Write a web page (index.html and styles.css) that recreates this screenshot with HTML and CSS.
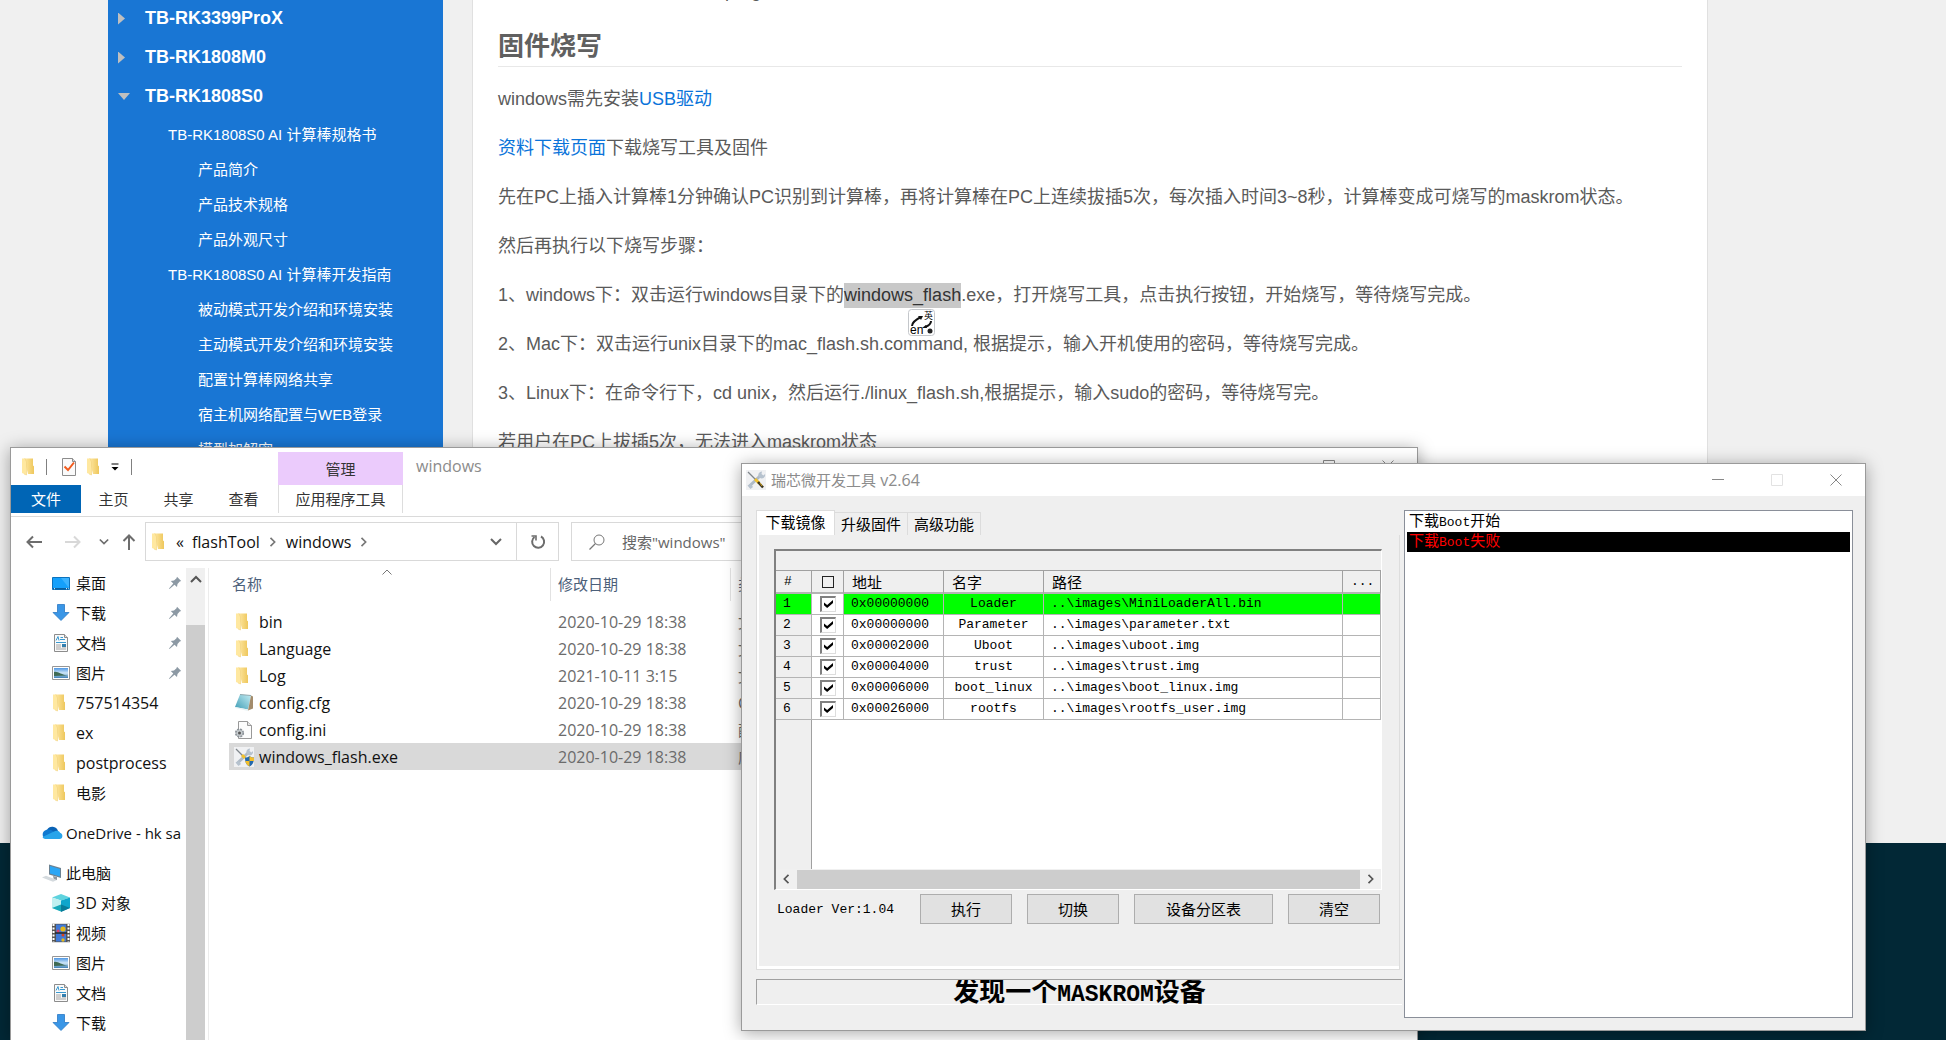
FILE: index.html
```html
<!DOCTYPE html>
<html lang="zh-CN">
<head>
<meta charset="utf-8">
<title>固件烧写</title>
<link rel="stylesheet" href="styles.css">
</head>
<body>
<svg class="sprite" aria-hidden="true">
  <defs>
    <linearGradient id="g-fold" x1="0" x2="1"><stop offset="0" stop-color="#ffe9a6"/><stop offset="1" stop-color="#eec75c"/></linearGradient>
    <linearGradient id="g-sky" x1="0" y1="0" x2="0" y2="1"><stop offset="0" stop-color="#4e97e4"/><stop offset=".5" stop-color="#cfe6f7"/><stop offset="1" stop-color="#3d7fb5"/></linearGradient>
    <linearGradient id="g-note" x1="0" y1="1" x2="1" y2="0"><stop offset="0" stop-color="#3f9db5"/><stop offset="1" stop-color="#c4edf4"/></linearGradient>
  </defs>
  <symbol id="i-folder" viewBox="0 0 20 20">
    <path d="M4 1.500h9v7l1 .8v7.700H8z" fill="url(#g-fold)"/>
    <path d="M2 1.500h3L6.500 5v13L2 16z" fill="#ffe8a0"/><path d="M5 1.500 6.500 5v13L4 17" fill="none" stroke="#f1d27c" stroke-width=".6"/>
  </symbol>
  <symbol id="i-check" viewBox="0 0 20 20">
    <path d="M3.500 1.500h10l3 3v14h-13z" fill="#fafafa" stroke="#8c8c8c"/><path d="M13.500 1.500v3h3" fill="#ddd" stroke="#8c8c8c"/>
    <path d="M5.500 9.500 9 13l6-7.500" fill="none" stroke="#f15a1d" stroke-width="2"/>
  </symbol>
  <symbol id="i-desktop" viewBox="0 0 20 20">
    <path d="M1.500 4.500h17v12h-17z" fill="#14a0fb" stroke="#0b72bd"/><path d="M10 5h8v10z" fill="#3bb3ff"/><path d="M2 15h16v1.500H2z" fill="#0a5f9e"/><path d="M3 15.700h1m11 0h1m1 0h.7" stroke="#fff"/>
  </symbol>
  <symbol id="i-down" viewBox="0 0 20 20"><path d="M6.500 1.500h7v8h4.500L10 17.500 2 9.500h4.500z" fill="#3a96e6" stroke="#2a78c4" stroke-width=".8"/></symbol>
  <symbol id="i-doc" viewBox="0 0 20 20">
    <path d="M3.500 1.500h10l3 3v14h-13z" fill="#fafafa" stroke="#8c8c8c"/><path d="M13.500 1.500v3h3" fill="#ddd" stroke="#8c8c8c"/>
    <path d="M5 7.500 7 3.500l1 4M9.500 4.500H12M9 6.500h5M5 9.500h10" fill="none" stroke="#3a9ad1"/><path d="M5 12h5m-5 2h5m-5 2h10m-4-2h4" stroke="#999" stroke-width=".9"/><path d="M11 11h4v3h-4z" fill="#347fae"/>
  </symbol>
  <symbol id="i-pic" viewBox="0 0 20 20">
    <path d="M1.500 3.500h17v13h-17z" fill="#fff" stroke="#969696"/><path d="M3 5h14v10H3z" fill="url(#g-sky)"/><path d="M3 9c4-1 7 3 14 3.500L3 13z" fill="#3f6b54"/>
  </symbol>
  <symbol id="i-cloud" viewBox="0 0 22 20">
    <path d="M6 7a6 6 0 0 1 11 1l-7 4z" fill="#0a62b5"/><path d="M5 7c3-1 6 0 8 2l-8 7A4.700 4.700 0 0 1 5 7z" fill="#1079d0"/><path d="M12.500 8.800c3-2 6-1 6.500 1 3.500.8 3 6.200-.5 6.200H5c-2 0-3-1-3.500-2z" fill="#28a4ea"/>
  </symbol>
  <symbol id="i-pc" viewBox="0 0 22 20">
    <path d="M8 1.500 20 5v10L8 11.500z" fill="#6c8292"/><path d="M9 3l10 3v7.500L9 10.500z" fill="#2ba6f5"/><path d="M12 13l4 1v3h-3z" fill="#8e979e"/><path d="M1 14.500 5 12.800l11 4.200-4 1.700z" fill="#d4dade"/>
  </symbol>
  <symbol id="i-cube" viewBox="0 0 20 20">
    <path d="M1 4.500 10 1l9 3.500-9 3z" fill="#5fd3de"/><path d="M1 4.500l9 3v11L1 15z" fill="#bff0f0"/><path d="M19 4.500l-9 3v11l9-3.500z" fill="#0fa6cb"/><path d="M1 15l9-3.500v7z" fill="#17a9b9"/><path d="M10 11.500V19l9-4z" fill="#087c99"/>
  </symbol>
  <symbol id="i-film" viewBox="0 0 20 20">
    <path d="M1 .8h18v18.400H1z" fill="#555"/><path d="M2.500 1v18M17.500 1v18" stroke="#fff" stroke-width="2" stroke-dasharray="2 1.500"/><path d="M5 1.500h10v8H5zM5 10.500h10v8H5z" fill="#3f79d8"/>
    <circle cx="12" cy="6" r="2.600" fill="#e3b71c"/><circle cx="7" cy="8" r="1.500" fill="#dd3f62"/><circle cx="12" cy="12" r="1.500" fill="#d9441d"/><circle cx="12" cy="17" r="1.700" fill="#e3b71c"/><path d="M4 10h12" stroke="#111"/>
  </symbol>
  <symbol id="i-cfg" viewBox="0 0 20 20">
    <path d="M6 1.500 17 2.500l-3 14L1 14z" fill="url(#g-note)"/><path d="M17 2.500l2 1v12l-5 2z" fill="#a38c6c"/><path d="M1 14l13 2.500v1.500L1 15z" fill="#e9f3f5"/><path d="M6 1.500 17 2.500" stroke="#8fa7ad"/>
  </symbol>
  <symbol id="i-ini" viewBox="0 0 20 20">
    <path d="M4.500 1.500h9l4 4v13h-13z" fill="#fcfcfc" stroke="#999"/><path d="M13.500 1.500v4h4" fill="#e5e5e5" stroke="#999"/>
    <circle cx="5.500" cy="13" r="3.800" fill="#c5cacd" stroke="#8b9298" stroke-width="1.600" stroke-dasharray="2 1"/><circle cx="5.500" cy="13" r="1.500" fill="#555"/>
  </symbol>
  <symbol id="i-tools" viewBox="0 0 20 20">
    <path d="M0 0h20v20H0z" fill="#f0f1f3"/><path d="M3 16.500 14 6" stroke="#aebac6" stroke-width="3"/><path d="M13 7a3.500 3.500 0 0 1 3-5.500L15.500 4l2 1.500L19 4a3.500 3.500 0 0 1-5 4z" fill="#b6c2ce"/><path d="M1.500 15.500 5 14l2 3-2.500 2z" fill="#b6c2ce"/>
    <path d="M2 2l8 8" stroke="#7f868c" stroke-width="1.200"/><path d="M9 9l4 4" stroke="#f2c12e" stroke-width="3"/><path d="M12 12l5 5.500" stroke="#3a3420" stroke-width="2.500"/><path d="M14 13l2 3" stroke="#d8a81e"/>
  </symbol>
  <symbol id="i-exe" viewBox="0 0 20 20">
    <path d="M0 0h20v20H0z" fill="#f0f1f3"/><path d="M3 16.500 14 6" stroke="#aebac6" stroke-width="3"/><path d="M13 7a3.500 3.500 0 0 1 3-5.500L15.500 4l2 1.500L19 4a3.500 3.500 0 0 1-5 4z" fill="#b6c2ce"/><path d="M1.500 15.500 5 14l2 3-2.500 2z" fill="#b6c2ce"/>
    <path d="M2 2l8 8" stroke="#7f868c" stroke-width="1.200"/><path d="M8 8l3 3" stroke="#f2c12e" stroke-width="3"/>
    <path d="M11 10.500c2 0 3-.5 4.500-1.500 1.500 1 2.500 1.500 4.500 1.500 0 5-1.500 7.500-4.500 9-3-1.500-4.500-4-4.500-9z" fill="#2368ab"/><path d="M15.500 9c1.500 1 2.500 1.500 4.500 1.500V14h-4.500zM15.500 14v5.500c-2.500-1.300-3.800-3-4.300-5.500z" fill="#f4be2a"/>
  </symbol>
  <symbol id="i-pin" viewBox="0 0 14 14"><path d="M9 .8 13.200 5l-1.500.5L9.500 8 9 11 6.500 8.700 1.500 13 1 12.500 5.300 7.500 2.800 5l3.200-.5L8.500 2.300z" fill="#8c99a4"/></symbol>
  <symbol id="i-min" viewBox="0 0 12 12"><path d="M0 5.500h12" stroke="currentColor"/></symbol>
  <symbol id="i-max" viewBox="0 0 12 12"><path d="M.5.5h11v11H.5z" fill="none" stroke="currentColor"/></symbol>
  <symbol id="i-close" viewBox="0 0 12 12"><path d="M.5.5l11 11m0-11-11 11" stroke="currentColor"/></symbol>
  <symbol id="i-left" viewBox="0 0 16 16"><path d="M16 8H1.500M7 2.500 1.500 8 7 13.500" fill="none" stroke="currentColor" stroke-width="2"/></symbol>
  <symbol id="i-chev" viewBox="0 0 12 12"><path d="M1 3l5 5 5-5" fill="none" stroke="currentColor" stroke-width="2"/></symbol>
  <symbol id="i-thin" viewBox="0 0 12 12"><path d="M1.500 8.500 6 4l4.500 4.500" fill="none" stroke="currentColor"/></symbol>
  <symbol id="i-refresh" viewBox="0 0 16 16"><path d="M11 2.500A6 6 0 1 1 4.500 3" fill="none" stroke="currentColor" stroke-width="2"/><path d="M1.500 2H6v4.500" fill="none" stroke="currentColor" stroke-width="1.600"/></symbol>
  <symbol id="i-search" viewBox="0 0 16 16"><circle cx="10" cy="6" r="5" fill="none" stroke="currentColor"/><path d="M6.500 9.500.5 15.500" stroke="currentColor" stroke-width="1.300"/></symbol>
</svg>

<div class="desktop">
  <div class="docs">
    <nav class="docs-nav">
      <a class="nav-top" href="#"><span class="tri"></span>TB-RK3399ProX</a>
      <a class="nav-top" href="#"><span class="tri"></span>TB-RK1808M0</a>
      <a class="nav-top" href="#"><span class="tri tri-open"></span>TB-RK1808S0</a>
      <a class="nav-sub" href="#">TB-RK1808S0 AI 计算棒规格书</a>
      <a class="nav-leaf" href="#">产品简介</a>
      <a class="nav-leaf" href="#">产品技术规格</a>
      <a class="nav-leaf" href="#">产品外观尺寸</a>
      <a class="nav-sub" href="#">TB-RK1808S0 AI 计算棒开发指南</a>
      <a class="nav-leaf" href="#">被动模式开发介绍和环境安装</a>
      <a class="nav-leaf" href="#">主动模式开发介绍和环境安装</a>
      <a class="nav-leaf" href="#">配置计算棒网络共享</a>
      <a class="nav-leaf" href="#">宿主机网络配置与WEB登录</a>
      <a class="nav-leaf" href="#">模型加解密</a>
    </nav>
    <main class="docs-main">
      <p class="cut">prog</p>
      <h2>固件烧写</h2>
      <p>windows需先安装<a href="#">USB驱动</a></p>
      <p><a href="#">资料下载页面</a>下载烧写工具及固件</p>
      <p>先在PC上插入计算棒1分钟确认PC识别到计算棒，再将计算棒在PC上连续拔插5次，每次插入时间3~8秒，计算棒变成可烧写的maskrom状态。</p>
      <p>然后再执行以下烧写步骤：</p>
      <p>1、windows下：双击运行windows目录下的<span class="picked">windows_flash<svg class="translate" viewBox="0 0 27 27"><rect x=".5" y=".5" width="26" height="26" rx="3" fill="#fff" stroke="#c4c7cb"/><path d="M4 17c0-3 3-6 9-9" fill="none" stroke="#111" stroke-width="2"/><path d="M15 7l-5 0 3 4z" fill="#111"/><path d="M23 12c0 3-3 5-6 6" fill="none" stroke="#111" stroke-width="2"/><path d="M14 19l4-3 1 3z" fill="#111"/><text x="16" y="10" class="tr-cjk">英</text><text x="2" y="25" class="tr-en">en</text><circle cx="22" cy="22" r="2.500" fill="#222"/></svg></span>.exe，打开烧写工具，点击执行按钮，开始烧写，等待烧写完成。</p>
      <p>2、Mac下：双击运行unix目录下的mac_flash.sh.command, 根据提示，输入开机使用的密码，等待烧写完成。</p>
      <p>3、Linux下：在命令行下，cd unix，然后运行./linux_flash.sh,根据提示，输入sudo的密码，等待烧写完。</p>
      <p>若用户在PC上拔插5次，无法进入maskrom状态</p>
    </main>
  </div>

  <section class="window explorer">
    <header class="ribbon">
      <div class="qat">
        <svg class="ico"><use href="#i-folder"/></svg><i class="bar"></i>
        <svg class="ico"><use href="#i-check"/></svg><svg class="ico"><use href="#i-folder"/></svg>
        <svg class="drop" viewBox="0 0 8 8"><path d="M.5 1h7" stroke="#000"/><path d="M.5 4h7L4 7.500z"/></svg><i class="bar"></i>
      </div>
      <div class="context">管理</div>
      <div class="titlebar">
        <span class="title">windows</span>
        <div class="controls">
          <button type="button" aria-label="最小化"><svg><use href="#i-min"/></svg></button>
          <button type="button" aria-label="最大化"><svg><use href="#i-max"/></svg></button>
          <button type="button" aria-label="关闭"><svg><use href="#i-close"/></svg></button>
        </div>
      </div>
      <div class="ribbon-tabs">
        <button type="button" class="file-tab">文件</button><button type="button">主页</button><button type="button">共享</button><button type="button">查看</button>
      </div>
      <button type="button" class="context-tab">应用程序工具</button>
    </header>
    <div class="address-row">
      <div class="arrows">
        <button type="button" aria-label="后退"><svg class="i16"><use href="#i-left"/></svg></button>
        <button type="button" aria-label="前进" disabled><svg class="i16"><use href="#i-left" class="flip"/></svg></button>
        <button type="button" aria-label="历史"><svg class="i10"><use href="#i-chev"/></svg></button>
        <button type="button" aria-label="上移"><svg class="i16"><use href="#i-left" class="turn"/></svg></button>
      </div>
      <div class="address">
        <svg class="ico"><use href="#i-folder"/></svg><span class="lead">«</span><span>flashTool</span>
        <svg class="i10 side"><use href="#i-chev"/></svg><span>windows</span><svg class="i10 side"><use href="#i-chev"/></svg>
        <svg class="i12 push"><use href="#i-chev"/></svg>
        <button type="button" class="refresh" aria-label="刷新"><svg class="i16"><use href="#i-refresh"/></svg></button>
      </div>
      <label class="search"><svg class="i16"><use href="#i-search"/></svg><input type="text" aria-label="搜索" placeholder='搜索"windows"'></label>
    </div>
    <div class="panes">
      <ul class="tree">
        <li><svg class="ico"><use href="#i-desktop"/></svg><span class="zh">桌面</span><svg class="pin"><use href="#i-pin"/></svg></li>
        <li><svg class="ico"><use href="#i-down"/></svg><span class="zh">下载</span><svg class="pin"><use href="#i-pin"/></svg></li>
        <li><svg class="ico"><use href="#i-doc"/></svg><span class="zh">文档</span><svg class="pin"><use href="#i-pin"/></svg></li>
        <li><svg class="ico"><use href="#i-pic"/></svg><span class="zh">图片</span><svg class="pin"><use href="#i-pin"/></svg></li>
        <li><svg class="ico"><use href="#i-folder"/></svg>757514354</li>
        <li><svg class="ico"><use href="#i-folder"/></svg>ex</li>
        <li><svg class="ico"><use href="#i-folder"/></svg>postprocess</li>
        <li><svg class="ico"><use href="#i-folder"/></svg><span class="zh">电影</span></li>
        <li class="root"><svg class="ico wide"><use href="#i-cloud"/></svg><span class="zh">OneDrive - hk sa</span></li>
        <li class="root"><svg class="ico wide"><use href="#i-pc"/></svg><span class="zh">此电脑</span></li>
        <li><svg class="ico"><use href="#i-cube"/></svg><span>3D <span class="zh">对象</span></span></li>
        <li><svg class="ico"><use href="#i-film"/></svg><span class="zh">视频</span></li>
        <li><svg class="ico"><use href="#i-pic"/></svg><span class="zh">图片</span></li>
        <li><svg class="ico"><use href="#i-doc"/></svg><span class="zh">文档</span></li>
        <li><svg class="ico"><use href="#i-down"/></svg><span class="zh">下载</span></li>
      </ul>
      <div class="vscroll"><svg class="i12"><use href="#i-chev" class="over"/></svg><div class="vthumb"></div></div>
      <div class="files">
        <svg class="sort i12"><use href="#i-thin"/></svg>
        <table>
          <colgroup><col class="f-name"><col class="f-date"><col></colgroup>
          <thead><tr><th>名称</th><th>修改日期</th><th>类型</th></tr></thead>
          <tbody>
            <tr><td><svg class="ico"><use href="#i-folder"/></svg>bin</td><td>2020-10-29 18:38</td><td class="zh">文件夹</td></tr>
            <tr><td><svg class="ico"><use href="#i-folder"/></svg>Language</td><td>2020-10-29 18:38</td><td class="zh">文件夹</td></tr>
            <tr><td><svg class="ico"><use href="#i-folder"/></svg>Log</td><td>2021-10-11 3:15</td><td class="zh">文件夹</td></tr>
            <tr><td><svg class="ico"><use href="#i-cfg"/></svg>config.cfg</td><td>2020-10-29 18:38</td><td>CFG</td></tr>
            <tr><td><svg class="ico"><use href="#i-ini"/></svg>config.ini</td><td>2020-10-29 18:38</td><td class="zh">配置设置</td></tr>
            <tr class="selected"><td><svg class="ico"><use href="#i-exe"/></svg>windows_flash.exe</td><td>2020-10-29 18:38</td><td class="zh">应用程序</td></tr>
          </tbody>
        </table>
      </div>
    </div>
  </section>

  <section class="window tool">
    <header class="titlebar">
      <svg class="ico"><use href="#i-tools"/></svg>
      <span class="title"><span class="zh">瑞芯微开发工具</span> v2.64</span>
      <div class="controls">
        <button type="button" aria-label="最小化"><svg><use href="#i-min"/></svg></button>
        <button type="button" aria-label="最大化" disabled><svg><use href="#i-max"/></svg></button>
        <button type="button" aria-label="关闭"><svg><use href="#i-close"/></svg></button>
      </div>
    </header>
    <div class="tool-body">
      <div class="tool-left">
        <div class="tabs"><button type="button" class="on">下载镜像</button><button type="button">升级固件</button><button type="button">高级功能</button></div>
        <div class="panel">
          <div class="grid">
            <table>
              <colgroup><col class="c-num"><col class="c-tick"><col class="c-addr"><col class="c-name"><col><col class="c-more"></colgroup>
              <thead>
                <tr class="band"><td colspan="6"></td></tr>
                <tr><th class="mono">#</th><th><input type="checkbox" class="all" aria-label="全选"></th><th>地址</th><th>名字</th><th>路径</th><th class="mono">...</th></tr>
              </thead>
              <tbody>
                <tr class="active"><th>1</th><td class="tick"><input type="checkbox" aria-label="Loader" checked></td><td>0x00000000</td><td class="mid">Loader</td><td>..\images\MiniLoaderAll.bin</td><td></td></tr>
                <tr><th>2</th><td class="tick"><input type="checkbox" aria-label="Parameter" checked></td><td>0x00000000</td><td class="mid">Parameter</td><td>..\images\parameter.txt</td><td></td></tr>
                <tr><th>3</th><td class="tick"><input type="checkbox" aria-label="Uboot" checked></td><td>0x00002000</td><td class="mid">Uboot</td><td>..\images\uboot.img</td><td></td></tr>
                <tr><th>4</th><td class="tick"><input type="checkbox" aria-label="trust" checked></td><td>0x00004000</td><td class="mid">trust</td><td>..\images\trust.img</td><td></td></tr>
                <tr><th>5</th><td class="tick"><input type="checkbox" aria-label="boot_linux" checked></td><td>0x00006000</td><td class="mid">boot_linux</td><td>..\images\boot_linux.img</td><td></td></tr>
                <tr><th>6</th><td class="tick"><input type="checkbox" aria-label="rootfs" checked></td><td>0x00026000</td><td class="mid">rootfs</td><td>..\images\rootfs_user.img</td><td></td></tr>
              </tbody>
            </table>
            <div class="filler"></div>
            <div class="hscroll"><svg class="i10"><use href="#i-chev" class="west"/></svg><div class="hthumb"></div><svg class="i10"><use href="#i-chev" class="east"/></svg></div>
          </div>
          <div class="actions">
            <span class="mono ver">Loader Ver:1.04</span>
            <button type="button">执行</button><button type="button">切换</button><button type="button" class="long">设备分区表</button><button type="button">清空</button>
          </div>
        </div>
        <div class="status">发现一个<span>MASKROM</span>设备</div>
      </div>
      <ul class="log">
        <li>下载<span class="mono">Boot</span>开始</li>
        <li class="fail">下载<span class="mono">Boot</span>失败</li>
      </ul>
    </div>
  </section>
</div>
</body>
</html>
```
FILE: styles.css
```css
* { box-sizing: border-box; }
body { margin: 0; }
ul { list-style: none; margin: 0; padding: 0; }
a { color: inherit; text-decoration: none; }
button { border: 0; padding: 0; margin: 0; background: none; font: inherit; color: inherit; }
table { border-collapse: separate; border-spacing: 0; table-layout: fixed; width: 100%; }
th, td { padding: 0; text-align: left; font-weight: normal; white-space: nowrap; }
svg { flex: none; display: block; }
.sprite { position: absolute; width: 0; height: 0; }

.desktop {
  position: relative;
  min-height: 100vh;
  background: #022836;
  overflow: hidden;
}

/* documentation page */
.docs {
  display: grid;
  grid-template-columns: 335px 1fr;
  column-gap: 29px;
  height: 843px;
  padding: 0 238px 0 108px;
  background: #f0f0f0;
  overflow: hidden;
  font-family: "Liberation Sans", "Noto Sans CJK SC", sans-serif;
}
.docs-nav { background: #1976d4; color: #fff; font-size: 15px; }
.docs-nav a { display: flex; align-items: center; height: 35px; padding-bottom: 2px; }
.docs-nav .nav-top { height: 39px; padding-left: 10px; font-size: 18px; font-weight: bold; }
.docs-nav .nav-sub { padding-left: 60px; }
.docs-nav .nav-leaf { padding-left: 90px; }
.tri { width: 27px; }
.tri::before { content: ""; display: block; width: 7px; height: 12px; background: #bfbfbf; clip-path: polygon(0 0, 100% 50%, 0 100%); }
.tri-open::before { width: 12px; height: 7px; clip-path: polygon(0 0, 100% 0, 50% 100%); }
.docs-main {
  padding: 0 25px;
  background: #fff;
  border: solid #e0e0e0;
  border-width: 0 1px;
  color: #5a5a5a;
  font-size: 18px;
  line-height: 25px;
}
.docs-main h2 { margin: 0 0 20px; padding-bottom: 2px; border-bottom: 1px solid #e8e8e8; font-size: 26px; line-height: 36px; color: #606060; }
.docs-main p { margin: 0 0 24px; white-space: nowrap; }
.docs-main .cut { margin-top: -21px; padding-left: 227px; }
.docs-main a { color: #0a74da; }
.picked { position: relative; display: inline-block; background: #c8c8c8; color: #333; }
.translate { position: absolute; top: 26px; right: 26px; width: 27px; height: 27px; }
.tr-cjk { font-size: 9px; }
.tr-en { font-size: 12px; }

/* windows */
.window {
  position: absolute;
  background: #fff;
  border: 1px solid #9a9a9a;
  box-shadow: 0 2px 16px rgba(0, 0, 0, .35);
  font-family: "Open Sans", "Noto Sans CJK SC", sans-serif;
  font-size: 16px;
  color: #111;
}
.zh { font-size: 15px; }
.ico { width: 20px; height: 20px; }
.i10 { width: 10px; height: 10px; }
.i12 { width: 12px; height: 12px; }
.i16 { width: 16px; height: 16px; }
.flip { transform: rotate(180deg); transform-origin: 8px 8px; }
.turn { transform: rotate(90deg); transform-origin: 8px 8px; }
.titlebar { display: flex; align-items: center; padding-bottom: 1px; color: #8c8c8c; }
.controls { display: flex; margin-left: auto; color: #888; }
.controls button { display: grid; place-items: center; width: 59px; height: 32px; }
.controls button:disabled { color: #e2e2e2; }
.controls svg { width: 12px; height: 12px; }

/* file explorer */
.explorer { top: 447px; left: 10px; right: 528px; bottom: 0; border-bottom: 0; overflow: hidden; }
.ribbon {
  display: grid;
  grid-template-columns: 267px 125px 1fr;
  grid-template-rows: 37px 31px;
  border-bottom: 1px solid #dadada;
  font-size: 15px;
  color: #333;
}
.qat { display: flex; align-items: center; gap: 12px; padding-left: 9px; }
.qat .ico { margin-right: -6px; }
.bar { width: 1px; height: 16px; background: #808080; }
.drop { width: 8px; height: 8px; }
.context { display: grid; place-items: center; margin-top: 4px; padding-bottom: 1px; background: #ebcbfc; }
.context-tab { height: 28px; padding-bottom: 2px; border: solid #ddd; border-width: 0 1px; }
.ribbon .titlebar { padding-left: 13px; font-size: 16px; }
.ribbon-tabs { display: flex; height: 28px; }
.ribbon-tabs button { width: 65px; padding-bottom: 2px; }
.ribbon-tabs .file-tab { width: 70px; background: #0065b5; color: #fff; }
.address-row { display: flex; align-items: center; padding-top: 5px; }
.arrows { display: flex; align-items: center; width: 134px; padding-left: 15px; color: #6d6d6d; }
.arrows button { width: 39px; }
.arrows button:nth-child(2) { width: 34px; }
.arrows button:nth-child(3) { width: 22px; }
.arrows button:nth-child(4) { width: 20px; }
.arrows button:disabled { color: #d8d8d8; }
.address { display: flex; align-items: center; width: 414px; height: 39px; padding-left: 4px; border: 1px solid #d9d9d9; }
.address .lead { margin: 0 8px 0 6px; }
.side { margin: 0 8px; color: #777; }
.side use { transform: rotate(-90deg); transform-origin: 5px 5px; }
.push { margin: 0 14px 0 auto; color: #666; }
.refresh { display: grid; place-items: center; width: 42px; height: 37px; border-left: 1px solid #d9d9d9; color: #6d6d6d; }
.search { display: flex; flex: 1; align-items: center; gap: 17px; height: 39px; margin-left: 12px; padding-left: 17px; border: 1px solid #d9d9d9; color: #777; }
.search input { flex: 1; border: 0; outline: 0; padding: 0; background: none; font: inherit; font-size: 15px; }
.search input::placeholder { color: #666; opacity: 1; }
.panes { display: flex; height: 480px; margin-top: 7px; }
.tree { width: 175px; overflow: hidden; }
.tree li { display: flex; align-items: center; gap: 5px; height: 30px; padding: 0 0 1px 40px; white-space: nowrap; }
.tree .root { height: 40px; padding-left: 30px; gap: 3px; margin: 5px 0 -5px; }
.tree .wide { width: 22px; }
.pin { width: 14px; height: 14px; margin: 0 4px 0 auto; }
.vscroll { width: 19px; padding-top: 5px; background: #f0f0f0; color: #555; }
.vscroll .i12 { margin-left: 4px; }
.over { transform: rotate(180deg); transform-origin: 6px 6px; }
.vthumb { height: 440px; margin-top: 40px; background: #cdcdcd; }
.files { position: relative; flex: 1; margin-left: 3px; padding-left: 20px; border-left: 1px solid #ececec; }
.sort { position: absolute; top: -2px; left: 172px; color: #777; }
.f-name { width: 322px; }
.f-date { width: 180px; }
.files th { height: 33px; padding-bottom: 3px; border-right: 1px solid #e2e2e2; font-size: 15px; color: #4c607a; }
.files th:first-child { padding-left: 3px; }
.files th + th, .files td + td { padding-left: 7px; }
.files td { height: 27px; color: #6b6b6b; }
.files td:first-child { color: #111; }
.files td .ico { display: inline-block; margin: 0 5px; vertical-align: -4px; }
.files tbody::before { content: ""; display: block; height: 7px; }
.selected td { background: #d9d9d9; }

/* flashing tool */
.tool { top: 463px; left: 741px; right: 80px; background: #efefef; font-size: 15px; }
.tool .titlebar { height: 32px; padding-left: 4px; gap: 5px; background: #fff; font-size: 16px; }
.mono, .grid td { font-family: "Liberation Mono", monospace; font-size: 13px; }
.tool-body { display: flex; gap: 2px; padding: 14px 12px 12px 14px; font-family: "Liberation Sans", "Noto Sans CJK SC", sans-serif; color: #000; }
.tool-left { flex: 1; min-width: 0; padding-bottom: 13px; }
.tabs { display: flex; align-items: flex-end; height: 25px; }
.tabs button { width: 73px; height: 23px; padding-bottom: 2px; border: solid #dcdcdc; border-width: 1px 1px 0 0; }
.tabs .on { width: 79px; height: 25px; padding-bottom: 4px; background: #fff; border-left-width: 1px; }
.panel { margin-right: 2px; padding: 14px 17px 45px; border: solid #ddd; border-width: 0 1px 1px; box-shadow: inset 2px 0 #fff, inset 0 -3px #fff; }
.grid { border: solid; border-width: 2px 1px 1px 2px; border-color: #808080 #fff #fff #808080; background: #fff; }
.grid input { display: block; appearance: none; margin: 0 0 0 8px; }
.grid .all { width: 12px; height: 12px; border: 1px solid #222; margin-left: 10px; }
.grid .tick input { width: 16px; height: 16px; border: solid; border-width: 2px 1px 1px 2px; border-color: #808080 #ddd #ddd #808080; }
.grid input:checked::before { content: ""; display: block; width: 9px; height: 8px; margin: 2px; background: #000; clip-path: polygon(0 30%, 35% 62%, 100% 0, 100% 38%, 35% 100%, 0 65%); }
.c-num { width: 36px; }
.c-tick { width: 32px; }
.c-addr { width: 100px; }
.c-name { width: 100px; }
.c-more { width: 38px; }
.grid .band td { height: 20px; background: #efefef; border-bottom: 1px solid #a0a0a0; }
.grid thead th { height: 23px; padding-left: 8px; background: #efefef; border-right: 1px solid #a0a0a0; border-bottom: 2px solid #b4b4b4; }
.grid thead th:nth-child(2) { padding-left: 0; }
.grid tbody th, .grid tbody td { height: 21px; border-right: 1px solid #b4b4b4; border-bottom: 1px solid #b4b4b4; padding-left: 7px; line-height: 18px; }
.grid tbody th { background: #efefef; font-family: "Liberation Mono", monospace; font-size: 13px; }
.grid tbody .tick { padding: 0; }
.grid tbody .mid { padding: 0; text-align: center; }
.grid .active td:not(.tick), .grid .active th { background: #0f0; }
.filler { width: 36px; height: 149px; background: #efefef; border-right: 1px solid #a0a0a0; }
.hscroll { display: flex; align-items: center; gap: 6px; height: 20px; padding: 0 5px; background: #f0f0f0; color: #555; }
.hthumb { flex: 1; height: 19px; background: #cdcdcd; }
.west { transform: rotate(90deg); transform-origin: 5px 5px; }
.east { transform: rotate(-90deg); transform-origin: 5px 5px; }
.actions { display: flex; align-items: center; gap: 15px; padding: 4px 2px 0 3px; }
.ver { flex: 1; }
.actions button { width: 92px; height: 30px; padding-bottom: 2px; background: #e1e1e1; border: 1px solid #adadad; }
.actions .long { width: 139px; }
.status {
  height: 26px;
  margin-top: 9px;
  border: solid;
  border-width: 1px 0 1px 1px;
  border-color: #a0a0a0 #fff #fff #a0a0a0;
  overflow: hidden;
  text-align: center;
  font-size: 26px;
  font-weight: bold;
  line-height: 24px;
}
.status span { font-family: "Liberation Mono", monospace; font-size: 23px; }
.log { width: 449px; padding: 1px; background: #fff; border: 1px solid #8a8f99; }
.log li { height: 20px; padding-left: 2px; margin: 0 1px; line-height: 18px; }
.log .fail { background: #000; color: #f00; }
```
